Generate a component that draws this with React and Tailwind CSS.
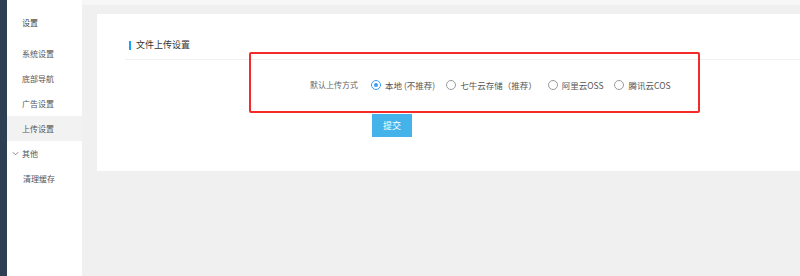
import React from 'react';

const menu = ['系统设置', '底部导航', '广告设置', '上传设置'];

const options = [
  { label: '本地 (不推荐)', checked: true },
  { label: '七牛云存储（推荐）' },
  { label: '阿里云OSS' },
  { label: '腾讯云COS' },
];

const Radio = ({ checked }) =>
  checked ? (
    <span className="flex h-[10px] w-[10px] items-center justify-center rounded-full border border-[#3a9ff5]">
      <span className="h-[4px] w-[4px] rounded-full bg-[#3a9ff5]"></span>
    </span>
  ) : (
    <span className="h-[10px] w-[10px] rounded-full border border-[#9a9a9a]"></span>
  );

const App = () => {
  return (
    <div
      className="relative flex h-[276px] w-[800px] overflow-hidden bg-[#f0f0f0]"
      style={{ fontFamily: '"Noto Sans CJK SC", "Noto Sans", sans-serif' }}
    >
      {/* dark rail */}
      <div className="w-[7px] shrink-0 bg-[#2e3f55]"></div>

      {/* side menu */}
      <div className="w-[75px] shrink-0 bg-white text-[8px] text-[#555]">
        <div className="mt-[11px] flex h-[24px] items-center pl-[15px] text-[#444]">设置</div>
        <div className="mt-[6px]">
          {menu.map((m) => (
            <div
              key={m}
              className={`flex h-[25px] items-center pl-[15px] ${m === '上传设置' ? 'bg-[#f2f2f2]' : ''}`}
            >
              {m}
            </div>
          ))}
          <div className="flex h-[25px] items-center pl-[5px]">
            <svg width="7" height="7" viewBox="0 0 8 8" className="mr-[3px]">
              <path d="M1 2.5 L4 5.5 L7 2.5" fill="none" stroke="#777" strokeWidth="1" />
            </svg>
            其他
          </div>
          <div className="flex h-[25px] items-center pl-[16px]">清理缓存</div>
        </div>
      </div>

      {/* main */}
      <div className="flex min-w-0 flex-1 flex-col">
        <div className="h-[5px] bg-[#f7f7f7]"></div>
        <div className="ml-[15px] mt-[9px] h-[157px] bg-white">
          <div className="ml-[28px] flex items-center border-b border-[#f0f0f0] pb-[8px] pt-[25px]">
            <span className="ml-[4px] h-[9px] w-[2px] bg-[#1e9fff]"></span>
            <span className="ml-[5px] text-[9px] leading-[12px] text-[#333]">文件上传设置</span>
          </div>

          <div className="mt-[18px] flex h-[14px] items-center">
            <div className="w-[261px] text-right text-[8px] text-[#666]">默认上传方式</div>
            <div className="ml-[13px] flex items-center text-[8.5px] text-[#555]">
              {options.map((o) => (
                <label key={o.label} className="mr-[11px] flex items-center">
                  <Radio checked={o.checked} />
                  <span className="ml-[4px]">{o.label}</span>
                </label>
              ))}
            </div>
          </div>

          <button className="ml-[275px] mt-[22px] flex h-[23px] w-[40px] items-center justify-center bg-[#43b3ea] text-[9px] text-white">
            提交
          </button>
        </div>
      </div>

      {/* annotation box */}
      <div className="absolute left-[249px] top-[52px] h-[61px] w-[451px] rounded-[2px] border-2 border-[#f52a2a]"></div>
    </div>
  );
};

export default App;
